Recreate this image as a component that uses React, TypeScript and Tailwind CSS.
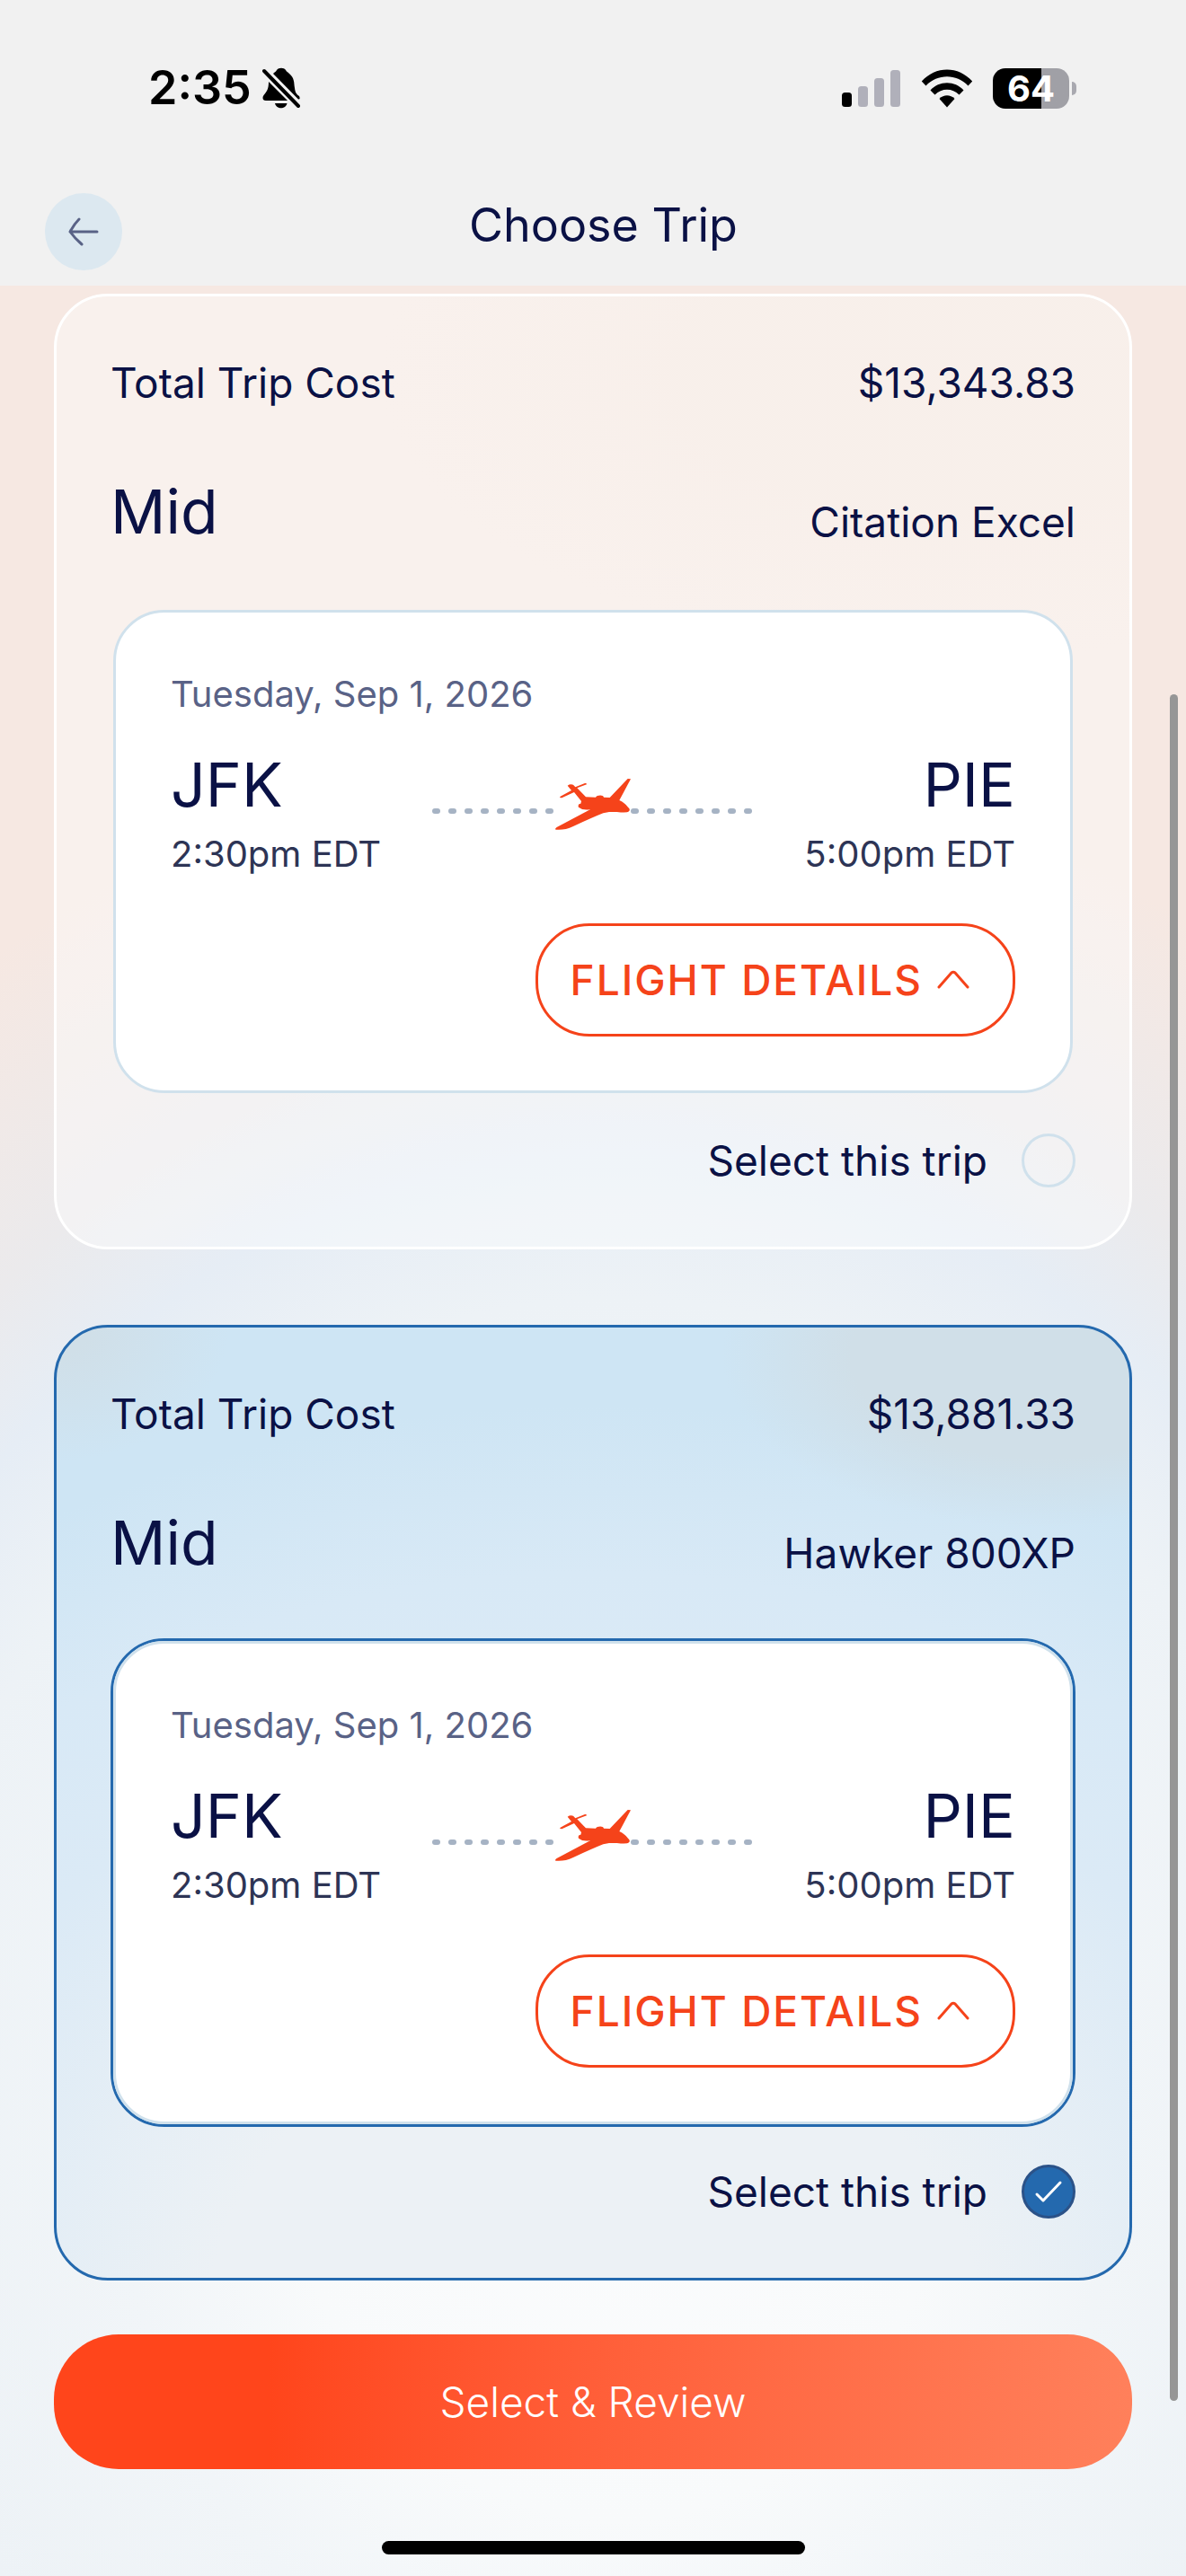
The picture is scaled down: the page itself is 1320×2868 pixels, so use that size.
import { useState } from "react";

const trips = [
  { id: "citation-excel", cost: "$13,343.83", category: "Mid", aircraft: "Citation Excel" },
  { id: "hawker-800xp", cost: "$13,881.33", category: "Mid", aircraft: "Hawker 800XP" },
];

type Trip = (typeof trips)[number];

function StatusBar() {
  return (
    <div className="flex h-[215px] items-start justify-between pt-[66px] pr-[122px] pl-[165px] text-black">
      <div className="flex h-16 items-center gap-3">
        <span className="text-[52px] leading-[64px] font-semibold">2:35</span>
        <svg className="h-[46px] w-[43px]" viewBox="0 0 43 46" aria-hidden="true">
          <path d="M7 16 C7 24 5 27 1.5 31 C-.5 34 .5 37 4 37 H28 Z" />
          <path d="M12 7 C14 5 15 5 16 3 C18 0 24 0 26 3 C27 5 28 5 30 7 C36 12 35 17 36 23 C36.500 28 38 30 41 32 C42 34 42 36 40 35.500 Z" />
          <path d="M14 40 H27.500 C26 47 15.500 47 14 40 Z" />
          <path d="M2 4 L40 43" stroke="#000" strokeWidth="4" strokeLinecap="round" />
        </svg>
      </div>
      <div className="flex h-16 items-center">
        <svg className="h-[42px] w-[66px]" viewBox="0 0 66 42" aria-hidden="true">
          <rect x="0" y="26" width="11" height="16" rx="3.500" />
          <rect x="18" y="19" width="11" height="23" rx="3.500" fill="#b0b0ba" />
          <rect x="36" y="10" width="11" height="32" rx="3.500" fill="#b0b0ba" />
          <rect x="54" y="1" width="11" height="41" rx="3.500" fill="#b0b0ba" />
        </svg>
        <svg className="ml-[22px] h-[43px] w-[58px]" viewBox="0 0 58 43" aria-hidden="true">
          <path d="M.8 13.500 C16-4 42-4 57.200 13.500 L52.500 18.500 C39.500 4.800 18.500 4.800 5.500 18.500 Z" />
          <path d="M10.500 23.500 C20 12.500 38 12.500 47.500 23.500 L42.500 28.500 C35 20.800 23 20.800 15.500 28.500 Z" />
          <path d="M20.500 33 C25 28 33 28 37.500 33 L29 42.500 Z" />
        </svg>
        <div className="ml-[22px] flex h-[45px] w-[85px] items-center justify-center rounded-[14px] bg-linear-to-r from-black from-64% to-[#a0a0a6] to-64% text-[40px] leading-[45px] font-bold text-white">
          64
        </div>
        <div className="ml-[3px] h-[15px] w-[5px] rounded-r-full bg-[#a9a9b0]" />
      </div>
    </div>
  );
}

function FlightRoute() {
  return (
    <svg className="h-[72px] w-[357px]" viewBox="-246 141 1071 216" aria-hidden="true">
      {Array.from({ length: 8 }, (_, i) => (
        <g key={i} fill="#a6b3c4">
          <rect x={-246 + i * 54} y="240" width="27" height="18" rx="9" />
          <rect x={417 + i * 54} y="240" width="27" height="18" rx="9" />
        </g>
      ))}
      <path
        fill="#f5431a"
        d="M417 142 L407 141 L347 204 L327 203 C326 193 303 195 300 203 L267 202 L238 172 L270 160 Q270 155 264 156 L232 169 L225 161 Q214 158 206 164 L219 180 L182 200 Q177 205 187 205 L228 186 L252 216 L250 224 C240 224 241 235 244 237 Q258 248 283 243 L170 303 Q162 309 167 311 Q195 314 225 300 Q290 270 325 256 L345 252 L371 252 Q405 256 411 250 Q417 243 408 236 Q398 222 379 213 Z"
      />
    </svg>
  );
}

function FlightCard({ selected }: { selected: boolean }) {
  return (
    <div
      className={`mt-[65px] rounded-[60px] border-[3px] ${
        selected ? "border-[#2469ae]" : "border-transparent"
      }`}
    >
      <div className="rounded-[57px] border-[3px] border-[#d0e1ec] bg-white px-[61px] pt-[67px] pb-[60px]">
        <p className="text-[40px] leading-[48px] text-[#596286]">Tuesday, Sep 1, 2026</p>
        <div className="mt-[34px] flex items-start justify-between">
          <div>
            <p className="text-[68px] leading-[84px]">JFK</p>
            <p className="mt-3 text-[40px] leading-[48px] text-[#2d3455]">2:30pm EDT</p>
          </div>
          <div className="pt-9">
            <FlightRoute />
          </div>
          <div className="text-right">
            <p className="text-[68px] leading-[84px]">PIE</p>
            <p className="mt-3 text-[40px] leading-[48px] text-[#2d3455]">5:00pm EDT</p>
          </div>
        </div>
        <div className="mt-[53px] flex justify-end">
          <button
            type="button"
            className="flex h-[126px] items-center gap-4 rounded-[60px] border-[3px] border-[#f5431a] pr-[48px] pl-[36px] text-[46px] font-medium tracking-[2px] text-[#f5431a]"
          >
            FLIGHT DETAILS
            <svg
              className="h-[22px] w-[36px]"
              viewBox="0 0 36 22"
              fill="none"
              stroke="currentColor"
              strokeWidth="3"
              strokeLinecap="round"
              strokeLinejoin="round"
              aria-hidden="true"
            >
              <path d="M2 19 L16 3 Q18 1.500 20 3 L34 19" />
            </svg>
          </button>
        </div>
      </div>
    </div>
  );
}

function TripCard({ trip, selected, onSelect }: { trip: Trip; selected: boolean; onSelect: () => void }) {
  return (
    <section
      className={`rounded-[60px] border-[3px] px-[60px] py-[66px] ${
        selected
          ? "border-[#2469ae] bg-[radial-gradient(ellipse_30%_18%_at_92%_3%,#d0dfe8_60%,transparent),radial-gradient(ellipse_16%_14%_at_0%_0%,#d0dfe8_20%,transparent),radial-gradient(ellipse_120%_110%_at_50%_105%,#ecf1f5_30%,#dbeaf6_58%,#d8e9f6_72%,#cee5f4_88%)]"
          : "border-white bg-[radial-gradient(ellipse_55%_30%_at_85%_8%,#f7eee880_50%,transparent)] bg-white/40"
      }`}
    >
      <div className="flex items-center justify-between text-[46px] leading-[60px]">
        <p>Total Trip Cost</p>
        <p>{trip.cost}</p>
      </div>
      <div className="mt-[71px] flex items-end justify-between">
        <h2 className="text-[68px] leading-[84px]">{trip.category}</h2>
        <p className="text-[46px] leading-[60px]">{trip.aircraft}</p>
      </div>
      <FlightCard selected={selected} />
      <div className="mt-[42px] flex items-center justify-end gap-[38px]">
        <label htmlFor={trip.id} className="text-[46px] leading-[60px]">
          Select this trip
        </label>
        <div className="relative size-[60px]">
          <input
            id={trip.id}
            type="radio"
            name="trip"
            checked={selected}
            onChange={onSelect}
            className="block size-[60px] appearance-none rounded-full border-[3px] border-[#d0e1ec] checked:border-[#2b5288] checked:bg-[#2469ae]"
          />
          {selected && (
            <svg
              className="pointer-events-none absolute inset-0 size-[60px]"
              viewBox="0 0 60 60"
              fill="none"
              stroke="#fff"
              strokeWidth="3"
              strokeLinecap="round"
              strokeLinejoin="round"
              aria-hidden="true"
            >
              <path d="M17 33 L24 40 L43 20" />
            </svg>
          )}
        </div>
      </div>
    </section>
  );
}

export default function App() {
  const [selectedId, setSelectedId] = useState("hawker-800xp");

  return (
    <div className="relative flex min-h-screen flex-col bg-[#f1f1f1] font-['Inter',sans-serif] text-[#0a1145]">
      <header>
        <StatusBar />
        <div className="flex h-[103px] items-start pr-[113px] pl-[50px]">
          <button
            type="button"
            aria-label="Back"
            className="flex size-[86px] items-center justify-center rounded-full bg-[#dce8f0]"
          >
            <svg
              className="h-[34px] w-[36px]"
              viewBox="0 0 36 34"
              fill="none"
              stroke="#596286"
              strokeWidth="3"
              strokeLinecap="round"
              strokeLinejoin="round"
              aria-hidden="true"
            >
              <path d="M33 17 H3 M13 3 Q8 8 3 17 Q8 24 16 31" />
            </svg>
          </button>
          <h1 className="flex-1 text-center text-[52px] leading-[72px]">Choose Trip</h1>
        </div>
      </header>

      <main className="flex flex-1 flex-col bg-[radial-gradient(ellipse_76%_46%_at_52%_81%,#fbfcfd,#f8fafb_36%,#f1f5f8_55%,#edf2f6_80%,#e6edf5_94%,#ebeaec_106%,#f6e8e2_132%)] px-[60px] pt-[9px] pb-6">
        <div className="flex flex-col gap-[84px]">
          {trips.map((trip) => (
            <TripCard
              key={trip.id}
              trip={trip}
              selected={trip.id === selectedId}
              onSelect={() => setSelectedId(trip.id)}
            />
          ))}
        </div>
        <button
          type="button"
          className="mt-[60px] h-[150px] rounded-[72px] bg-linear-to-r from-[#ff451b] from-20% to-[#ff805b] text-[46px] font-light text-white"
        >
          Select &amp; Review
        </button>
        <div className="mt-20 h-[15px] w-[471px] self-center rounded-full bg-black" />
      </main>

      <div className="absolute top-[773px] right-[9px] h-[1900px] w-[9px] rounded-full bg-[#969696]" />
    </div>
  );
}
